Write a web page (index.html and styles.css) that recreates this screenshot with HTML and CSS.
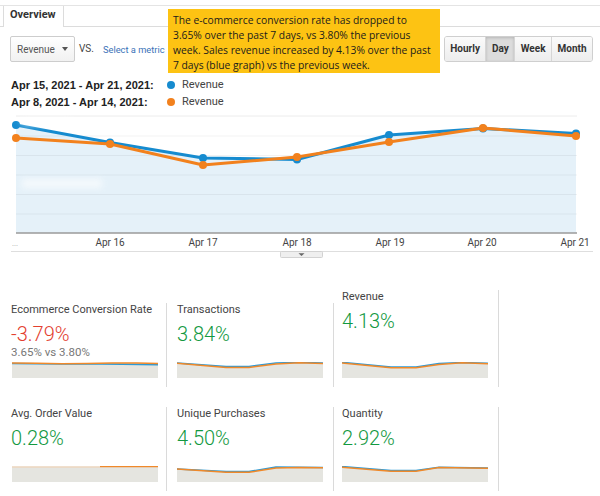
FILE: index.html
```html
<!DOCTYPE html>
<html lang="en">
<head>
<meta charset="utf-8">
<title>Overview</title>
<link rel="stylesheet" href="styles.css">
</head>
<body>
<div class="page">
  <div class="tabs">
    <div class="tab">Overview</div>
  </div>

  <div class="callout">The e-commerce conversion rate has dropped to<br>3.65% over the past 7 days, vs 3.80% the previous<br>week. Sales revenue increased by 4.13% over the past<br>7 days (blue graph) vs the previous week.</div>

  <div class="toolbar">
    <div class="dropdown"><span>Revenue</span><span class="caret"></span></div>
    <span class="vs">VS.</span>
    <span class="metric-link">Select a metric</span>
    <span class="spacer"></span>
    <div class="btngroup">
      <span class="btn">Hourly</span>
      <span class="btn active">Day</span>
      <span class="btn">Week</span>
      <span class="btn">Month</span>
    </div>
  </div>

  <div class="legend">
    <div class="legend-row"><span class="range">Apr 15, 2021 - Apr 21, 2021:</span><span class="dot dot-blue"></span><span class="legend-label">Revenue</span></div>
    <div class="legend-row"><span class="range">Apr 8, 2021 - Apr 14, 2021:</span><span class="dot dot-orange"></span><span class="legend-label">Revenue</span></div>
  </div>

  <svg class="chart" width="600" height="152" viewBox="0 110 600 152">
    <defs>
      <filter id="blur" x="-30%" y="-80%" width="160%" height="260%"><feGaussianBlur stdDeviation="3"/></filter>
    </defs>
    <line x1="16" y1="116" x2="577" y2="116" stroke="#ececec"/>
    <path d="M16,125 L110,142.5 L203,158 L297,159.5 L389,135 L483,128.5 L576,133.5 L576,233 L16,233 Z" fill="#e5f1f9"/>
    <g stroke="#000" stroke-opacity="0.05">
      <line x1="16" y1="136" x2="577" y2="136"/>
      <line x1="16" y1="155.5" x2="577" y2="155.5"/>
      <line x1="16" y1="175" x2="577" y2="175"/>
      <line x1="16" y1="194.5" x2="577" y2="194.5"/>
      <line x1="16" y1="214" x2="577" y2="214"/>
    </g>
    <line x1="16" y1="233" x2="577" y2="233" stroke="#9a9a9a" stroke-width="1.5"/>
    <polyline points="16,125 110,142.5 203,158 297,159.5 389,135 483,128.5 576,133.5" fill="none" stroke="#168bcf" stroke-width="3" stroke-linejoin="round"/>
    <g fill="#168bcf">
      <circle cx="16" cy="125" r="4"/><circle cx="110" cy="142.5" r="4"/><circle cx="203" cy="158" r="4"/><circle cx="297" cy="159.5" r="4"/><circle cx="389" cy="135" r="4"/><circle cx="483" cy="128.5" r="4"/><circle cx="576" cy="133.5" r="4"/>
    </g>
    <polyline points="16,138 110,144 203,165 297,157 389,142 483,128 576,136" fill="none" stroke="#f2811d" stroke-width="3" stroke-linejoin="round"/>
    <g fill="#f2811d">
      <circle cx="16" cy="138" r="4"/><circle cx="110" cy="144" r="4"/><circle cx="203" cy="165" r="4"/><circle cx="297" cy="157" r="4"/><circle cx="389" cy="142" r="4"/><circle cx="483" cy="128" r="4"/><circle cx="576" cy="136" r="4"/>
    </g>
    <rect x="22" y="119" width="50" height="6" fill="#fff" opacity="0.7" filter="url(#blur)"/>
    <rect x="22" y="179" width="80" height="9" fill="#fff" opacity="0.6" filter="url(#blur)"/>
    <g class="axis-label" text-anchor="middle">
      <text x="110" y="246">Apr 16</text>
      <text x="203" y="246">Apr 17</text>
      <text x="297" y="246">Apr 18</text>
      <text x="390" y="246">Apr 19</text>
      <text x="482" y="246">Apr 20</text>
      <text x="575" y="246">Apr 21</text>
    </g>
    <text class="axis-dots" x="12" y="246">...</text>
    <line x1="11" y1="251.5" x2="593" y2="251.5" stroke="#dedede"/>
    <rect x="280.5" y="251.5" width="42" height="6" rx="1" fill="#efefef" stroke="#d2d2d2"/>
    <path d="M298.5,253.3 L304.5,253.3 L301.5,256 Z" fill="#666"/>
  </svg>

  <div class="metrics">
    <div class="card card--c1">
      <div class="card-title">Ecommerce Conversion Rate</div>
      <div class="card-value neg">-3.79%</div>
      <div class="card-sub">3.65% vs 3.80%</div>
      <svg class="spark" width="146" height="16" viewBox="0 0 146 16">
        <polygon points="0,1 25,1.2 50,1.8 75,1.6 100,1 125,1.1 146,1.4 146,16 0,16" fill="#e5e5e0"/>
        <polyline points="0,1.6 50,2 90,2 110,2.2 146,2.8" fill="none" stroke="#2d9ad6" stroke-width="1.5"/>
        <polyline points="0,1 25,1.2 50,1.8 75,1.6 100,1 125,1.1 146,1.4" fill="none" stroke="#f0892a" stroke-width="1.5"/>
      </svg>
    </div>
    <div class="card">
      <div class="card-title">Transactions</div>
      <div class="card-value pos">3.84%</div>
      <svg class="spark" width="146" height="16" viewBox="0 0 146 16">
        <polygon points="0,1 49,4.5 72,4.5 99,1 122,0.3 146,1 146,16 0,16" fill="#e5e5e0"/>
        <polyline points="0,1 49,4.5 72,4.5 99,1 122,0.3 146,1" fill="none" stroke="#2d9ad6" stroke-width="1.5"/>
        <polyline points="0,1.3 49,5.5 72,5.5 99,2 122,0.8 146,1.4" fill="none" stroke="#f0892a" stroke-width="1.5"/>
      </svg>
    </div>
    <div class="card card--c3 card--raised">
      <div class="card-title">Revenue</div>
      <div class="card-value pos">4.13%</div>
      <svg class="spark" width="146" height="16" viewBox="0 0 146 16">
        <polygon points="0,0.3 49,5 74,5 97,1.5 120,0.5 146,1.3 146,16 0,16" fill="#e5e5e0"/>
        <polyline points="0,0.3 49,5 74,5 97,1.5 120,0.5 146,1.3" fill="none" stroke="#2d9ad6" stroke-width="1.5"/>
        <polyline points="0,1.1 49,5.8 74,5.8 97,2.5 120,0.8 146,1.8" fill="none" stroke="#f0892a" stroke-width="1.5"/>
      </svg>
    </div>

    <div class="card card--c1">
      <div class="card-title">Avg. Order Value</div>
      <div class="card-value pos">0.28%</div>
      <svg class="spark" width="146" height="16" viewBox="0 0 146 16">
        <polygon points="0,0.8 146,0.8 146,16 0,16" fill="#e5e5e0"/>
        <line x1="0" y1="0.9" x2="88" y2="0.9" stroke="#edd6bf" stroke-width="1.5"/>
        <line x1="88" y1="0.6" x2="146" y2="0.6" stroke="#f0892a" stroke-width="1.5"/>
      </svg>
    </div>
    <div class="card">
      <div class="card-title">Unique Purchases</div>
      <div class="card-value pos">4.50%</div>
      <svg class="spark" width="146" height="16" viewBox="0 0 146 16">
        <polygon points="0,3 49,5.5 72,5.5 99,1 122,1.3 146,1.5 146,16 0,16" fill="#e5e5e0"/>
        <polyline points="0,3 49,5.5 72,5.5 99,1 122,1.3 146,1.5" fill="none" stroke="#2d9ad6" stroke-width="1.5"/>
        <polyline points="0,3 49,6.3 72,6.3 99,2 122,1.6 146,1.8" fill="none" stroke="#f0892a" stroke-width="1.5"/>
      </svg>
    </div>
    <div class="card card--c3">
      <div class="card-title">Quantity</div>
      <div class="card-value pos">2.92%</div>
      <svg class="spark" width="146" height="16" viewBox="0 0 146 16">
        <polygon points="0,0.5 49,4.5 74,4.5 97,1.3 146,2 146,16 0,16" fill="#e5e5e0"/>
        <polyline points="0,0.5 49,4.5 74,4.5 97,1.3 146,2" fill="none" stroke="#2d9ad6" stroke-width="1.5"/>
        <polyline points="0,1.3 49,5.3 74,5.3 97,1.4 146,2.3" fill="none" stroke="#f0892a" stroke-width="1.5"/>
      </svg>
    </div>
  </div>
</div>
</body>
</html>
```

FILE: styles.css
```css
html, body {
  margin: 0;
  padding: 0;
  background: #fff;
}

body {
  width: 600px;
  height: 496px;
  overflow: hidden;
  font-family: Roboto, "Liberation Sans", Arial, sans-serif;
  color: #333;
}

.page {
  position: relative;
  width: 600px;
  height: 496px;
}

/* Tabs */
.tabs {
  margin-top: 5px;
  height: 20px;
  border-top: 1px solid #e4e4e4;
  border-bottom: 1px solid #dcdcdc;
  display: flex;
  padding-left: 3px;
}

.tab {
  box-sizing: border-box;
  width: 61px;
  height: 21px;
  margin-bottom: -1px;
  padding-left: 6px;
  background: #fff;
  border-left: 1px solid #dcdcdc;
  border-right: 1px solid #dcdcdc;
  font-size: 11px;
  font-weight: 700;
  line-height: 17px;
  color: #333;
}

/* Callout overlay */
.callout {
  position: absolute;
  left: 168px;
  top: 4px;
  width: 272px;
  height: 64px;
  box-sizing: border-box;
  padding: 4px 0 0 5px;
  background: #fdc313;
  font-family: "Open Sans", "Noto Sans", sans-serif;
  font-size: 10.3px;
  line-height: 15px;
  color: #1b1b1b;
  white-space: nowrap;
}

/* Toolbar */
.toolbar {
  display: flex;
  align-items: center;
  height: 26px;
  margin-top: 9px;
  padding: 0 7px 0 10px;
}

.dropdown {
  box-sizing: border-box;
  width: 65px;
  height: 26px;
  display: flex;
  align-items: center;
  padding-left: 6px;
  border: 1px solid #cdcdcd;
  border-radius: 2px;
  background: linear-gradient(#ffffff, #f1f1f1);
  font-size: 10px;
  color: #555;
}

.caret {
  margin-left: 7px;
  width: 0;
  height: 0;
  border-top: 4px solid #555;
  border-left: 3.5px solid transparent;
  border-right: 3.5px solid transparent;
}

.vs {
  margin-left: 4px;
  font-size: 10px;
  color: #444;
  position: relative;
  top: -1px;
}

.metric-link {
  margin-left: 9px;
  font-size: 9.3px;
  color: #3a72b8;
}

.spacer {
  flex: 1;
}

.btngroup {
  display: flex;
  height: 26px;
  box-sizing: border-box;
  border: 1px solid #cfcfcf;
  border-radius: 3px;
  overflow: hidden;
}

.btn {
  padding: 0 5.5px;
  line-height: 24px;
  font-size: 10px;
  font-weight: 700;
  color: #333;
  background: linear-gradient(#fbfbfb, #ededed);
  border-left: 1px solid #d6d6d6;
}

.btn:first-child {
  border-left: none;
}

.btn.active {
  background: #dcdcdc;
  box-shadow: inset 0 1px 3px rgba(0, 0, 0, 0.18);
}

/* Legend */
.legend {
  margin-top: 14px;
  padding-left: 11px;
}

.legend-row {
  display: flex;
  align-items: center;
  height: 17px;
  font-size: 11px;
}

.range {
  width: 156px;
  font-family: "Liberation Sans", Arial, sans-serif;
  font-weight: 700;
  color: #222;
}

.dot {
  width: 8px;
  height: 8px;
  border-radius: 50%;
}

.dot-blue {
  background: #168bcf;
}

.dot-orange {
  background: #f2811d;
}

.legend-label {
  margin-left: 7px;
  color: #444;
}

/* Chart */
.chart {
  display: block;
}

.axis-label {
  font-family: Roboto, "Liberation Sans", sans-serif;
  font-size: 10px;
  fill: #444;
}

.axis-dots {
  font-family: "Liberation Sans", sans-serif;
  font-size: 7px;
  fill: #999;
}

/* Metrics */
.metrics {
  display: grid;
  grid-template-columns: 167px 167px 165px;
  row-gap: 20px;
  margin-top: 41px;
}

.card {
  box-sizing: border-box;
  height: 84px;
  display: flex;
  flex-direction: column;
  padding: 0 0 9px 10px;
  border-right: 1px solid #dadada;
}

.card--c1 {
  padding-left: 11px;
}

.card--c3 {
  padding-left: 8px;
}

.card--raised {
  margin-top: -13px;
  height: 97px;
}

.card-title {
  font-size: 11px;
  line-height: 14px;
  color: #444;
  white-space: nowrap;
}

.card-value {
  margin-top: 7px;
  font-size: 20px;
  font-weight: 300;
  line-height: 20px;
}

.card-value.neg {
  color: #e3402f;
}

.card-value.pos {
  color: #13993f;
}

.card-sub {
  margin-top: 2px;
  font-size: 11.5px;
  line-height: 12px;
  color: #777;
}

.spark {
  display: block;
  margin-top: auto;
}

.card--c1 .spark {
  margin-left: 1px;
}
```
